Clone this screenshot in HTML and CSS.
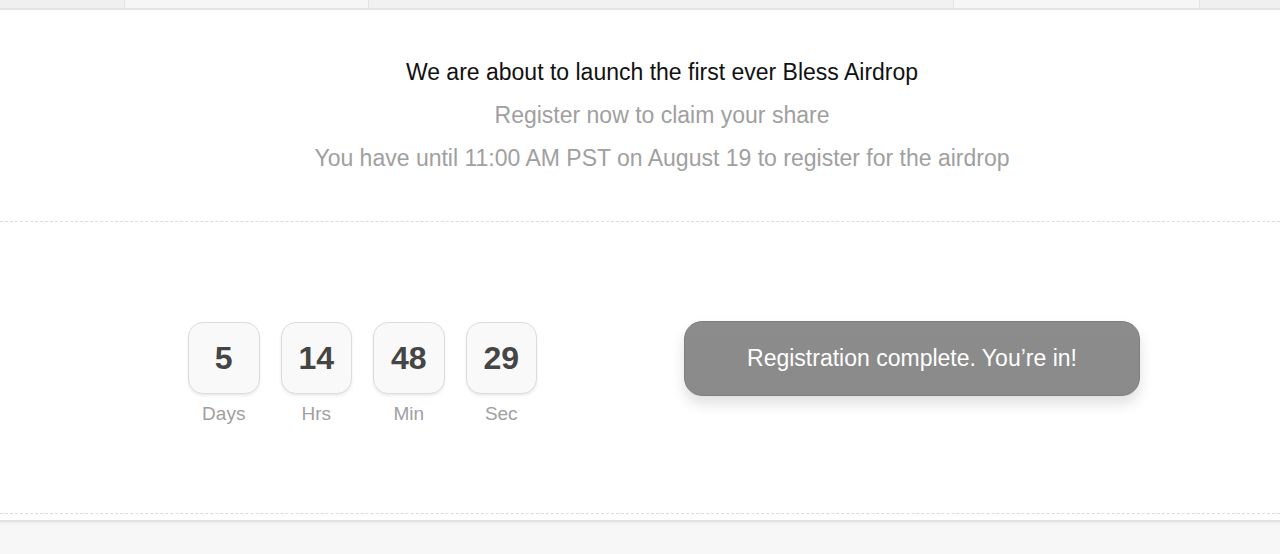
FILE: index.html
```html
<!DOCTYPE html>
<html>
<head>
<meta charset="utf-8">
<link rel="stylesheet" href="styles.css">
</head>
<body>
<div class="topbar">
  <div class="seg seg1"></div>
  <div class="seg seg2"></div>
  <div class="seg seg3"></div>
  <div class="seg seg4"></div>
  <div class="seg seg5"></div>
</div>
<main class="card">
  <section class="intro">
    <p class="title">We are about to launch the first ever Bless Airdrop</p>
    <p class="sub">Register now to claim your share</p>
    <p class="sub">You have until 11:00 AM PST on August 19 to register for the airdrop</p>
  </section>
  <section class="action">
    <div class="countdown">
      <div class="unit"><div class="box">5</div><div class="label">Days</div></div>
      <div class="unit"><div class="box">14</div><div class="label">Hrs</div></div>
      <div class="unit"><div class="box">48</div><div class="label">Min</div></div>
      <div class="unit"><div class="box">29</div><div class="label">Sec</div></div>
    </div>
    <button class="done">Registration complete. You’re in!</button>
  </section>
</main>
<div class="footer"></div>
</body>
</html>
```
FILE: styles.css
```css
* { box-sizing: border-box; }
html, body { margin: 0; padding: 0; }
body {
  width: 1280px;
  height: 554px;
  overflow: hidden;
  background: #f7f7f7;
  font-family: "Liberation Sans", Arial, sans-serif;
}
.topbar {
  height: 10px;
  display: flex;
  background: #f4f4f4;
  border-bottom: 2px solid #e4e4e4;
}
.seg { height: 8px; }
.seg1 { width: 125px; background: #f0f0f0; border-right: 1px solid #e4e4e4; }
.seg2 { width: 244px; background: #f6f6f6; border-right: 1px solid #e4e4e4; }
.seg3 { width: 585px; background: #f1f1f1; border-right: 1px solid #e4e4e4; }
.seg4 { width: 246px; background: #f6f6f6; border-right: 1px solid #e4e4e4; }
.seg5 { flex: 1; background: #f0f0f0; }
.card {
  background: #fff;
  height: 512px;
  border-bottom: 2px solid #e2e2e2;
  box-shadow: 0 2px 3px rgba(0,0,0,0.04);
  padding-bottom: 6px;
  display: flex;
  flex-direction: column;
}
.intro {
  padding-top: 41px;
  padding-left: 44px;
  height: 212px;
  border-bottom: 1px dashed #dcdcdc;
  text-align: center;
}
.intro p {
  margin: 0;
  font-size: 23px;
  line-height: 43px;
}
.title { color: #111; }
.sub { color: #a0a0a0; }
.action {
  flex: 1;
  border-bottom: 1px dashed #dcdcdc;
  display: flex;
  align-items: flex-start;
  padding-top: 100px;
  padding-left: 188px;
}
.countdown {
  display: flex;
  gap: 21px;
}
.unit {
  display: flex;
  flex-direction: column;
  align-items: center;
}
.box {
  width: 71.5px;
  height: 72px;
  border: 1px solid #dcdcdc;
  border-radius: 15px;
  background: #f9f9f9;
  box-shadow: 0 2px 3px rgba(0,0,0,0.08);
  display: flex;
  align-items: center;
  justify-content: center;
  font-size: 32px;
  font-weight: bold;
  color: #454545;
}
.label {
  margin-top: 9px;
  font-size: 19px;
  color: #a0a0a0;
}
.done {
  margin-left: 147px;
  margin-top: -1px;
  width: 456px;
  height: 75px;
  border: 1px solid #7e7e7e;
  border-radius: 18px;
  background: linear-gradient(#8c8c8c, #8a8a8a);
  box-shadow: 0 8px 14px rgba(0,0,0,0.12);
  color: #fff;
  font-family: "Liberation Sans", Arial, sans-serif;
  font-size: 23px;
  padding: 0;
}
.footer { height: 30px; }
```
